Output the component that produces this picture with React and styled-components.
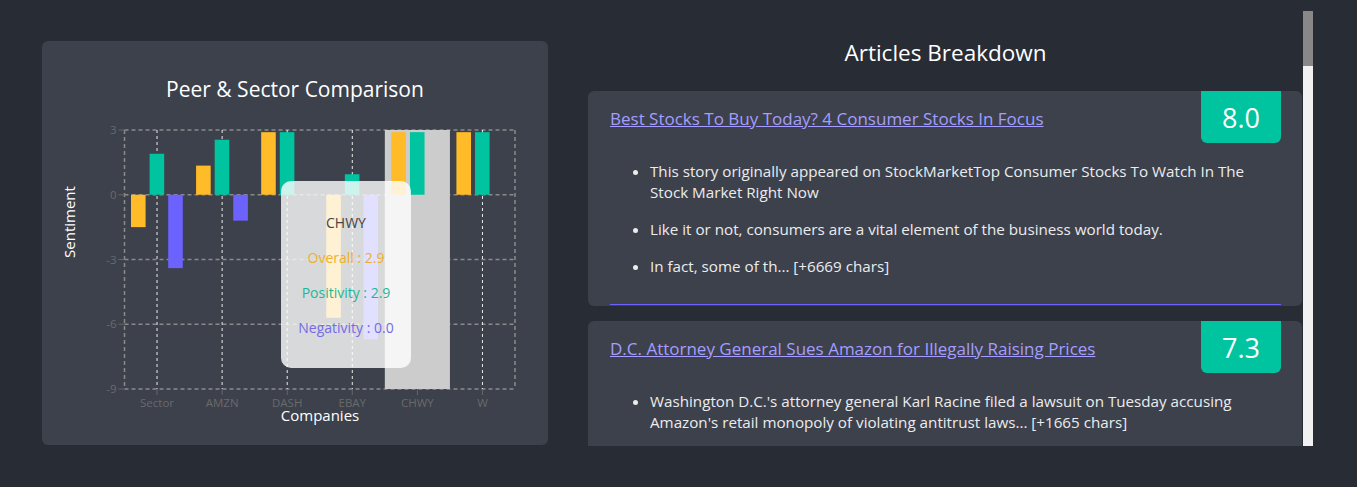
import styled, { createGlobalStyle } from "styled-components"

const GlobalStyle = createGlobalStyle`
  body {
    margin: 0;
    background: #282c34;
    font-family: "Open Sans", "Noto Sans", sans-serif;
    color: #fff;
  }
`;

const Page = styled.div`
  display: flex;
  align-items: flex-start;
  height: 487px;
  box-sizing: border-box;
  padding: 11px 44px 0 42px;
  overflow: hidden;
`;

const ChartCard = styled.section`
  width: 506px;
  height: 404px;
  margin-top: 30px;
  background: #3c414c;
  border-radius: 6px;
  box-sizing: border-box;
  padding-top: 36px;
  flex-shrink: 0;
`;

const ChartTitle = styled.h2`
  margin: 0;
  text-align: center;
  font-size: 21px;
  line-height: 24px;
  font-weight: 400;
  color: #fff;
`;

const ChartWrap = styled.div`
  position: relative;
  width: 506px;
  height: 344px;
`;

const Tooltip = styled.div`
  position: absolute;
  left: 239px;
  top: 80px;
  width: 130px;
  height: 187px;
  box-sizing: border-box;
  padding-top: 24px;
  border-radius: 10px;
  background: rgba(255, 255, 255, 0.8);
  text-align: center;
  font-size: 14px;
`;

const TipRow = styled.div`
  line-height: 35px;
  color: ${(p) => p.color || "#444"};
`;

const ArticlesPanel = styled.div`
  display: flex;
  width: 725px;
  height: 435px;
  margin-left: 40px;
  flex-shrink: 0;
`;

const ArticlesList = styled.div`
  flex: 1;
  overflow: hidden;
`;

const ScrollTrack = styled.div`
  width: 10px;
  flex-shrink: 0;
  background: #f1f1f1;
`;

const ScrollThumb = styled.div`
  height: 55px;
  background: #888;
`;

const Heading = styled.h2`
  margin: 0 0 24px;
  padding-top: 28px;
  text-align: center;
  font-size: 22.5px;
  line-height: 28px;
  font-weight: 400;
  color: #fff;
`;

const Card = styled.article`
  background: #3c414c;
  border-radius: 6px;
  padding: 0 21px 1px 22px;
  margin: 0 1px 15px 0;
`;

const CardBody = styled.div`
  border-bottom: 1px solid #6c63ff;
  padding-bottom: 27px;
`;

const CardHeader = styled.div`
  display: flex;
  justify-content: space-between;
  align-items: center;
  height: 52px;
`;

const ArticleLink = styled.a`
  margin-top: 2px;
  font-size: 17px;
  color: #a59dff;
  text-decoration: underline;
  cursor: pointer;
`;

const Score = styled.div`
  width: 80px;
  height: 52px;
  flex-shrink: 0;
  display: flex;
  align-items: center;
  justify-content: center;
  background: #00c49f;
  border-radius: 0 0 6px 6px;
  font-size: 27px;
  color: #fff;
`;

const Points = styled.ul`
  margin: 18px 0 0;
  padding-left: 40px;
`;

const Point = styled.li`
  font-size: 15.2px;
  line-height: 21px;
  color: #ececec;
  margin-bottom: 16px;

  &:last-child {
    margin-bottom: 0;
  }
`;

const COLORS = { overall: "#ffbb28", positivity: "#00c49f", negativity: "#6c63ff" };

const data = [
  { name: "Sector", overall: -1.5, positivity: 1.9, negativity: -3.4 },
  { name: "AMZN", overall: 1.35, positivity: 2.55, negativity: -1.2 },
  { name: "DASH", overall: 2.9, positivity: 2.9, negativity: 0 },
  { name: "EBAY", overall: -5.7, positivity: 0.95, negativity: -6.7 },
  { name: "CHWY", overall: 2.9, positivity: 2.9, negativity: 0 },
  { name: "W", overall: 2.9, positivity: 2.9, negativity: 0 },
];

const articles = [
  {
    title: "Best Stocks To Buy Today? 4 Consumer Stocks In Focus",
    score: "8.0",
    points: [
      "This story originally appeared on StockMarketTop Consumer Stocks To Watch In The Stock Market Right Now",
      "Like it or not, consumers are a vital element of the business world today.",
      "In fact, some of th... [+6669 chars]",
    ],
  },
  {
    title: "D.C. Attorney General Sues Amazon for Illegally Raising Prices",
    score: "7.3",
    points: [
      "Washington D.C.'s attorney general Karl Racine filed a lawsuit on Tuesday accusing Amazon's retail monopoly of violating antitrust laws... [+1665 chars]",
    ],
  },
];

// chart geometry, in px inside the svg
const W = 506;
const H = 344;
const PL = 82.5;
const PR = 473;
const PT = 29;
const PB = 288;
const unit = (PB - PT) / 12;
const band = (PR - PL) / 6;
const barW = 14.6;
const yOf = (v) => PT + (3 - v) * unit;
const FONT = "Open Sans, sans-serif";

const PeerChart = () => {
  const ticks = [3, 0, -3, -6, -9];
  return (
    <svg width={W} height={H} style={{ display: "block" }}>
      {/* horizontal grid + borders */}
      {ticks.map((t) => (
        <line key={t} x1={PL} x2={PR} y1={yOf(t)} y2={yOf(t)} stroke="#8a8a8a" strokeWidth="1.5" strokeDasharray="4 3" />
      ))}
      <line x1={PL} x2={PL} y1={PT} y2={PB} stroke="#8a8a8a" strokeWidth="1.5" strokeDasharray="4 3" />
      <line x1={PR} x2={PR} y1={PT} y2={PB} stroke="#8a8a8a" strokeWidth="1.5" strokeDasharray="4 3" />
      {data.map((d, i) => (
        <line key={d.name} x1={PL + band * (i + 0.5)} x2={PL + band * (i + 0.5)} y1={PT} y2={PB} stroke="#ececec" strokeWidth="1" strokeDasharray="3 3" />
      ))}

      {/* hover cursor */}
      <rect x={PL + band * 4} y={PT} width={band} height={PB - PT} fill="#cccccc" />

      {/* bars */}
      {data.map((d, i) =>
        ["overall", "positivity", "negativity"].map((k, j) => {
          const v = d[k];
          if (!v) return null;
          const y0 = yOf(0);
          const y1 = yOf(v);
          return (
            <rect
              key={d.name + k}
              x={PL + band * i + 6.5 + j * (barW + 4)}
              y={Math.min(y0, y1)}
              width={barW}
              height={Math.abs(y1 - y0)}
              fill={COLORS[k]}
            />
          );
        })
      )}

      {/* y axis */}
      {ticks.map((t) => (
        <g key={"y" + t}>
          <line x1={PL - 6} x2={PL} y1={yOf(t)} y2={yOf(t)} stroke="#666" />
          <text x={PL - 8} y={yOf(t) + 4} textAnchor="end" fontSize="11.5" fill="#6a6a6a" fontFamily={FONT}>
            {t}
          </text>
        </g>
      ))}

      {/* x axis */}
      {data.map((d, i) => (
        <g key={"x" + d.name}>
          <line x1={PL + band * (i + 0.5)} x2={PL + band * (i + 0.5)} y1={PB} y2={PB + 6} stroke="#666" />
          <text x={PL + band * (i + 0.5)} y={PB + 18} textAnchor="middle" fontSize="11.5" fill="#6a6a6a" fontFamily={FONT}>
            {d.name}
          </text>
        </g>
      ))}

      <text x="0" y="0" transform="translate(33 121) rotate(-90)" textAnchor="middle" fontSize="15" fill="#fff" fontFamily={FONT}>
        Sentiment
      </text>
      <text x="278" y="320" textAnchor="middle" fontSize="15" fill="#fff" fontFamily={FONT}>
        Companies
      </text>
    </svg>
  );
};

const App = () => {
  return (
    <>
      <GlobalStyle />
      <Page>
        <ChartCard>
          <ChartTitle>Peer &amp; Sector Comparison</ChartTitle>
          <ChartWrap>
            <PeerChart />
            <Tooltip>
              <TipRow>CHWY</TipRow>
              <TipRow color="#efae2a">Overall : 2.9</TipRow>
              <TipRow color="#1cb896">Positivity : 2.9</TipRow>
              <TipRow color="#736bea">Negativity : 0.0</TipRow>
            </Tooltip>
          </ChartWrap>
        </ChartCard>

        <ArticlesPanel>
          <ArticlesList>
            <Heading>Articles Breakdown</Heading>
            {articles.map((a) => (
              <Card key={a.title}>
                <CardBody>
                  <CardHeader>
                    <ArticleLink>{a.title}</ArticleLink>
                    <Score>{a.score}</Score>
                  </CardHeader>
                  <Points>
                    {a.points.map((p) => (
                      <Point key={p}>{p}</Point>
                    ))}
                  </Points>
                </CardBody>
              </Card>
            ))}
          </ArticlesList>
          <ScrollTrack>
            <ScrollThumb />
          </ScrollTrack>
        </ArticlesPanel>
      </Page>
    </>
  );
};

export default App
